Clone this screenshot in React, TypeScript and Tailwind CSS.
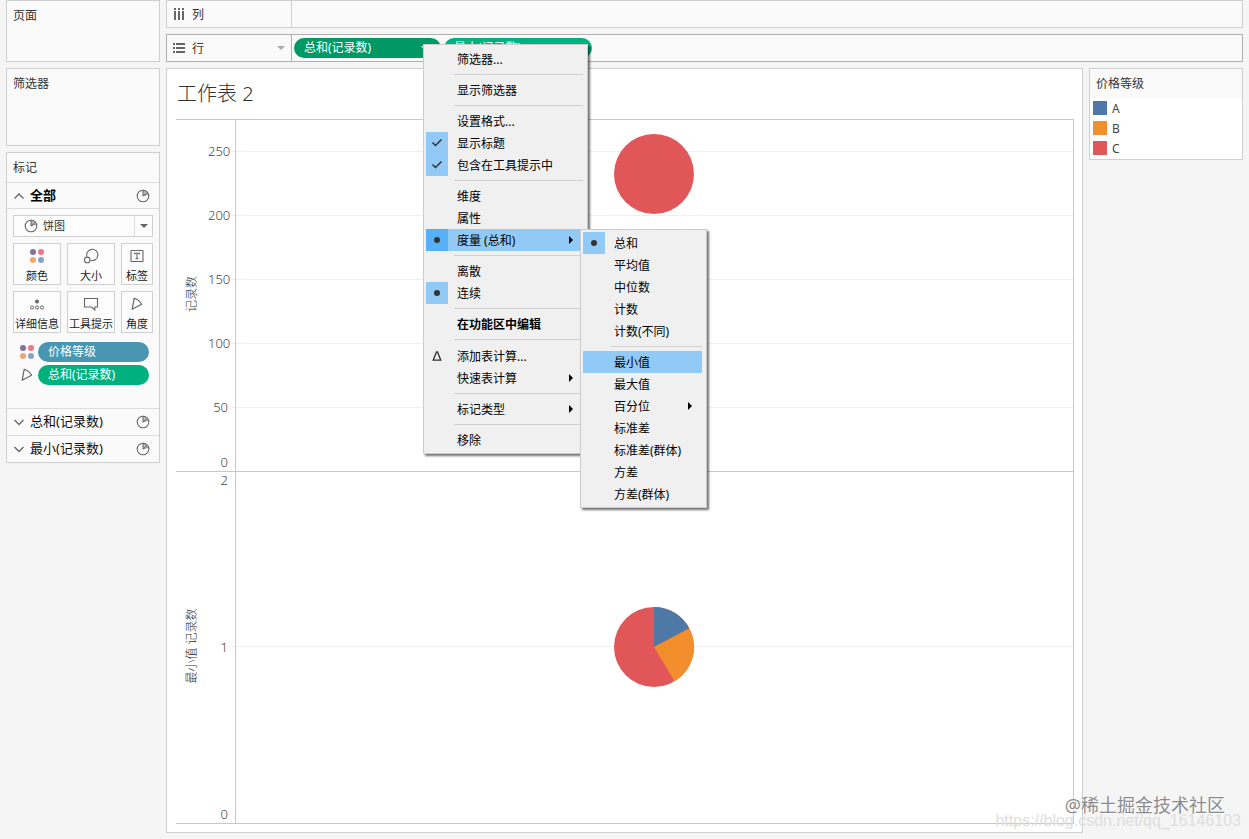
import React from "react";

const COLORS = { A: "#4e79a7", B: "#f28e2b", C: "#e15759" };

const PieIcon = ({ className = "" }: { className?: string }) => (
  <svg
    className={`h-3.5 w-3.5 shrink-0 ${className}`}
    viewBox="0 0 14 14"
    fill="none"
    stroke="#666"
  >
    <circle cx="7" cy="7" r="5.8" strokeWidth="1.1" />
    <path d="M7 7V1.2A5.8 5.8 0 0 1 11.4 3.4Z" fill="#bbb" strokeWidth="1" />
    <path d="M7 7L12.2 5" strokeWidth="0.8" />
  </svg>
);

const ColorIcon = ({ className = "" }: { className?: string }) => (
  <svg className={`h-4 w-4 shrink-0 ${className}`} viewBox="0 0 16 16">
    <circle cx="4" cy="4" r="3" fill="#84719b" />
    <circle cx="12" cy="4" r="3" fill="#ed7687" />
    <circle cx="4" cy="12" r="3" fill="#f4a56c" />
    <circle cx="12" cy="12" r="3" fill="#86a3c6" />
  </svg>
);

const SizeIcon = () => (
  <svg className="h-4 w-4" viewBox="0 0 16 16" fill="none" stroke="#666" strokeWidth="1.1">
    <path d="M4 8.8A5.6 5.6 0 1 1 7.4 12.2" />
    <circle cx="4.2" cy="11.9" r="2.8" />
  </svg>
);

const LabelIcon = () => (
  <svg className="h-4 w-4" viewBox="0 0 16 16" fill="none" stroke="#666">
    <rect x="2" y="2.5" width="12" height="11" rx="0.5" strokeWidth="1.1" />
    <path d="M5.5 6.6V5.3H10.5V6.6M8 5.3V10.8M6.6 10.8H9.4" strokeWidth="1.1" />
  </svg>
);

const DetailIcon = () => (
  <svg className="h-4 w-4" viewBox="0 0 16 16" fill="none" stroke="#666">
    <circle cx="8" cy="5.5" r="2" fill="#666" stroke="none" />
    <circle cx="3" cy="11.5" r="1.6" />
    <circle cx="8" cy="11.5" r="1.6" />
    <circle cx="13" cy="11.5" r="1.6" />
  </svg>
);

const TooltipIcon = () => (
  <svg className="h-4 w-4" viewBox="0 0 16 16" fill="none" stroke="#666" strokeWidth="1.1">
    <path d="M1.5 2.5H14.5V11H11.8V14L8.5 11H1.5Z" />
  </svg>
);

const AngleIcon = ({ className = "" }: { className?: string }) => (
  <svg
    className={`h-4 w-4 shrink-0 ${className}`}
    viewBox="0 0 16 16"
    fill="none"
    stroke="#666"
    strokeWidth="1.2"
  >
    <path d="M5.2 2.2Q10.4 4 12.6 8.2L3.2 13.2Z" strokeLinejoin="round" />
  </svg>
);

const Chevron = ({ up = false }: { up?: boolean }) => (
  <svg
    className="h-3 w-3 shrink-0"
    viewBox="0 0 12 12"
    fill="none"
    stroke="#666"
    strokeWidth="1.3"
  >
    <path d={up ? "M1.5 8.5L6 4L10.5 8.5" : "M1.5 4L6 8.5L10.5 4"} />
  </svg>
);

const ColumnsIcon = () => (
  <svg className="h-3.5 w-3.5 shrink-0" viewBox="0 0 14 14" fill="#666">
    <path d="M2 1h2v2H2zM6 1h2v2H6zM10 1h2v2h-2zM2 4h2v9H2zM6 4h2v9H6zM10 4h2v9h-2z" />
  </svg>
);

const RowsIcon = () => (
  <svg className="h-3.5 w-3.5 shrink-0" viewBox="0 0 14 14" fill="#666">
    <path d="M1 2h2v2H1zM1 6h2v2H1zM1 10h2v2H1zM4 2h9v2H4zM4 6h9v2H4zM4 10h9v2H4z" />
  </svg>
);

const Panel = ({
  title,
  className,
}: {
  title: string;
  className: string;
}) => (
  <section className={`border border-[#cfcfcf] bg-[#fafafa] px-1.5 py-[5px] ${className}`}>
    <h2 className="text-xs leading-5 text-[#333]">{title}</h2>
  </section>
);

const MarkButton = ({
  label,
  children,
}: {
  label: string;
  children: React.ReactNode;
}) => (
  <button className="flex h-[42px] flex-col items-center justify-between overflow-hidden border border-[#cfcfcf] bg-[#fcfcfc] pt-1 text-[11px] leading-4 whitespace-nowrap text-[#222]">
    {children}
    <span>{label}</span>
  </button>
);

const MarkSection = ({ label }: { label: string }) => (
  <button className="flex h-[27px] w-full items-center gap-[5px] border-t border-[#dcdcdc] pr-[9px] pl-1.5 text-[13px] text-[#111]">
    <Chevron />
    <span>{label}</span>
    <PieIcon className="ml-auto" />
  </button>
);

const MarksCard = () => (
  <section className="border border-[#cfcfcf] bg-[#fafafa]">
    <h2 className="h-[29px] px-1.5 pt-[5px] text-xs leading-5 text-[#333]">标记</h2>
    <button className="flex h-[27px] w-full items-center gap-[5px] border-y border-[#dcdcdc] pr-[9px] pl-1.5 text-[13px] font-bold text-black">
      <Chevron up />
      <span>全部</span>
      <PieIcon className="ml-auto" />
    </button>
    <div className="px-1.5 pt-1.5">
      <div className="flex h-[22px] items-center border border-[#cfcfcf] bg-[#fcfcfc] pl-2.5">
        <PieIcon />
        <select
          aria-label="标记类型"
          className="h-full min-w-0 flex-1 appearance-none bg-transparent pl-[5px] text-[11px] text-[#333] outline-none"
        >
          <option>饼图</option>
        </select>
        <span className="flex h-full w-[18px] items-center justify-center border-l border-[#dcdcdc]">
          <svg className="h-1 w-2" viewBox="0 0 8 4" fill="#666">
            <path d="M0 0H8L4 4Z" />
          </svg>
        </span>
      </div>
      <div className="mt-1.5 grid grid-cols-[48px_48px_1fr] gap-1.5">
        <MarkButton label="颜色">
          <ColorIcon />
        </MarkButton>
        <MarkButton label="大小">
          <SizeIcon />
        </MarkButton>
        <MarkButton label="标签">
          <LabelIcon />
        </MarkButton>
        <MarkButton label="详细信息">
          <DetailIcon />
        </MarkButton>
        <MarkButton label="工具提示">
          <TooltipIcon />
        </MarkButton>
        <MarkButton label="角度">
          <AngleIcon />
        </MarkButton>
      </div>
      <div className="mt-[9px] flex h-[66px] flex-col gap-[3px] pr-1 pl-1.5">
        <div className="flex items-center gap-[3px]">
          <ColorIcon />
          <button className="h-5 flex-1 rounded-full bg-[#4996b2] px-2.5 text-left text-xs text-white">
            价格等级
          </button>
        </div>
        <div className="flex items-center gap-[3px]">
          <AngleIcon />
          <button className="h-5 flex-1 rounded-full bg-[#00b180] px-2.5 text-left text-xs text-white">
            总和(记录数)
          </button>
        </div>
      </div>
    </div>
    <MarkSection label="总和(记录数)" />
    <MarkSection label="最小(记录数)" />
  </section>
);

const Legend = () => (
  <aside className="w-[154px] shrink-0 self-start border border-[#cfcfcf] bg-white pb-px">
    <h2 className="h-[29px] bg-[#fafafa] px-1.5 pt-[5px] text-xs leading-5 text-[#333]">
      价格等级
    </h2>
    <ul>
      {Object.entries(COLORS).map(([name, color]) => (
        <li key={name} className="flex h-5 items-center gap-[5px] pl-[3px] text-xs text-[#444]">
          <span className="h-3.5 w-3.5" style={{ backgroundColor: color }} />
          <span className="pt-0.5">{name}</span>
        </li>
      ))}
    </ul>
  </aside>
);

type Slice = { color: string; from: number; to: number };

const point = (deg: number) => {
  const rad = (deg * Math.PI) / 180;
  return `${40 + 40 * Math.sin(rad)} ${40 - 40 * Math.cos(rad)}`;
};

const Pie = ({ slices = [] }: { slices?: Slice[] }) => (
  <svg className="h-20 w-20" viewBox="0 0 80 80">
    <circle cx="40" cy="40" r="40" fill={COLORS.C} />
    {slices.map((s) => (
      <path
        key={s.color}
        d={`M40 40L${point(s.from)}A40 40 0 0 1 ${point(s.to)}Z`}
        fill={s.color}
      />
    ))}
  </svg>
);

const AxisTitle = ({ children }: { children: React.ReactNode }) => (
  <div className="flex w-8 shrink-0 items-center justify-center pb-0.5">
    <span className="-rotate-90 text-xs font-light whitespace-nowrap text-[#333]">
      {children}
    </span>
  </div>
);

// one tick label with its grid line running across the plot
const GridRow = ({ label, className }: { label: string; className: string }) => (
  <div className={`flex items-center ${className}`}>
    <span className="w-5 shrink-0 text-right text-[13px] leading-4 font-light text-[#444]">
      {label}
    </span>
    <span className="ml-[3px] h-px flex-1 bg-[#efefef]" />
  </div>
);

const EdgeLabel = ({ children }: { children: React.ReactNode }) => (
  <span className="w-5 text-right text-[13px] leading-4 font-light text-[#444]">
    {children}
  </span>
);

const Sheet = () => (
  <main className="flex min-w-0 flex-1 flex-col border border-[#cfcfcf] bg-white pr-2 pb-2 pl-[9px]">
    <h1 className="h-[50px] pt-[11px] pl-px text-xl leading-7 font-light text-[#333]">
      工作表 2
    </h1>
    <div className="grid flex-1 grid-rows-2 border-y border-[#c8c8c8]">
      <div className="flex border-b border-[#c8c8c8]">
        <AxisTitle>记录数</AxisTitle>
        <div className="grid flex-1 border-r border-[#c8c8c8]">
          <div className="col-start-1 row-start-1 -mt-px flex flex-col pb-px">
            {["250", "200", "150", "100", "50"].map((v) => (
              <GridRow key={v} label={v} className="h-16" />
            ))}
            <div className="flex flex-1 items-end">
              <EdgeLabel>0</EdgeLabel>
            </div>
          </div>
          <div className="col-start-1 row-start-1 ml-[27px] flex justify-center border-l border-[#c8c8c8] pt-3.5 pr-0.5">
            <Pie />
          </div>
        </div>
      </div>
      <div className="flex">
        <AxisTitle>最小值 记录数</AxisTitle>
        <div className="grid flex-1 border-r border-[#c8c8c8]">
          <div className="col-start-1 row-start-1 flex flex-col justify-between pb-px">
            <EdgeLabel>2</EdgeLabel>
            <GridRow label="1" className="h-4" />
            <EdgeLabel>0</EdgeLabel>
          </div>
          <div className="col-start-1 row-start-1 ml-[27px] flex items-center justify-center border-l border-[#c8c8c8] pr-0.5">
            <Pie
              slices={[
                { color: COLORS.A, from: 0, to: 62 },
                { color: COLORS.B, from: 62, to: 149 },
              ]}
            />
          </div>
        </div>
      </div>
    </div>
  </main>
);

type Item = {
  label: string;
  mark?: "check" | "dot" | "delta";
  arrow?: boolean;
  active?: boolean;
  bold?: boolean;
};

const MenuItem = ({ label, mark, arrow, active, bold }: Item) => {
  const ticked = mark === "check" || mark === "dot";
  return (
    <button
      role="menuitem"
      className={`flex w-full items-center text-left text-xs text-black ${
        mark === "delta" ? "h-[23px]" : "h-[22px]"
      } ${active ? "bg-[#91c9f7]" : ""} ${bold ? "font-bold" : ""}`}
    >
      <span
        className={`mr-[9px] flex h-full w-[22px] shrink-0 items-center justify-center ${
          ticked ? (active ? "bg-[#56b0fa]" : "bg-[#91c9f7]") : ""
        }`}
      >
        {mark && (
          <svg className="h-3 w-3" viewBox="0 0 12 12" fill="none" stroke="#333">
            {mark === "check" && <path d="M1.5 5.5L4.5 8.5L10.5 2.5" strokeWidth="1.5" />}
            {mark === "dot" && <circle cx="6" cy="6" r="3" fill="#333" stroke="none" />}
            {mark === "delta" && <path d="M5.5 2H6.5L9.8 10.2H2.2Z" strokeWidth="1.3" />}
          </svg>
        )}
      </span>
      <span className="flex-1 pt-0.5 whitespace-nowrap">{label}</span>
      {arrow && (
        <svg className="mr-2.5 h-2 w-1" viewBox="0 0 4 8">
          <path d="M0 0L4 4L0 8Z" />
        </svg>
      )}
    </button>
  );
};

const Menu = ({ groups, className }: { groups: Item[][]; className: string }) => (
  <div
    role="menu"
    className={`absolute border border-[#cccccc] bg-[#f0f0f0] pr-1 pl-0.5 shadow-[2px_2px_2px_rgba(0,0,0,0.55)] ${className}`}
  >
    {groups.map((items, i) => (
      <React.Fragment key={i}>
        {i > 0 && <div className="my-1 ml-7 h-px bg-[#d0d0d0]" />}
        {items.map((item) => (
          <MenuItem key={item.label} {...item} />
        ))}
      </React.Fragment>
    ))}
  </div>
);

const pillMenu: Item[][] = [
  [{ label: "筛选器..." }],
  [{ label: "显示筛选器" }],
  [
    { label: "设置格式..." },
    { label: "显示标题", mark: "check" },
    { label: "包含在工具提示中", mark: "check" },
  ],
  [
    { label: "维度" },
    { label: "属性" },
    { label: "度量 (总和)", mark: "dot", arrow: true, active: true },
  ],
  [{ label: "离散" }, { label: "连续", mark: "dot" }],
  [{ label: "在功能区中编辑", bold: true }],
  [
    { label: "添加表计算...", mark: "delta" },
    { label: "快速表计算", arrow: true },
  ],
  [{ label: "标记类型", arrow: true }],
  [{ label: "移除" }],
];

const measureMenu: Item[][] = [
  [
    { label: "总和", mark: "dot" },
    { label: "平均值" },
    { label: "中位数" },
    { label: "计数" },
    { label: "计数(不同)" },
  ],
  [
    { label: "最小值", active: true },
    { label: "最大值" },
    { label: "百分位", arrow: true },
    { label: "标准差" },
    { label: "标准差(群体)" },
    { label: "方差" },
    { label: "方差(群体)" },
  ],
];

const App: React.FC = () => {
  return (
    <div className="relative flex min-h-screen gap-1.5 bg-[#f5f5f5] px-1.5 pb-1.5 font-['Noto_Sans','Noto_Sans_CJK_SC',sans-serif]">
      {/* Cards */}
      <div className="flex w-[154px] shrink-0 flex-col gap-1.5">
        <Panel title="页面" className="h-[62px]" />
        <Panel title="筛选器" className="h-[78px]" />
        <MarksCard />
      </div>

      <div className="flex min-w-0 flex-1 flex-col gap-1.5">
        {/* Shelves */}
        <div className="flex h-7 border border-[#cfcfcf] bg-[#fafafa]">
          <div className="flex w-[125px] shrink-0 items-center gap-1.5 border-r border-[#cfcfcf] pl-[5px] text-xs text-[#333]">
            <ColumnsIcon />
            <span className="pt-0.5">列</span>
          </div>
        </div>
        <div className="flex h-7 border border-[#b0b0b0] bg-[#fafafa]">
          <div className="flex w-[125px] shrink-0 items-center gap-1.5 border-r border-[#b0b0b0] pr-1.5 pl-[5px] text-xs text-[#333]">
            <RowsIcon />
            <span className="pt-0.5">行</span>
            <svg className="ml-auto h-1 w-2" viewBox="0 0 8 4" fill="#aaa">
              <path d="M0 0H8L4 4Z" />
            </svg>
          </div>
          <div className="flex items-center gap-[3px] pl-0.5">
            <button className="flex h-5 w-[147px] items-center justify-between rounded-full bg-[#009966] pr-3 pl-2.5 text-xs text-white">
              总和(记录数)
              <svg className="h-1 w-2" viewBox="0 0 8 4" fill="#fff">
                <path d="M0 0H8L4 4Z" />
              </svg>
            </button>
            <button className="h-5 w-[148px] rounded-full bg-[#00b180] px-2.5 text-left text-xs text-white">
              最小(记录数)
            </button>
          </div>
        </div>

        <div className="flex flex-1 gap-1.5">
          <Sheet />
          <Legend />
        </div>
      </div>

      {/* Context menus */}
      <Menu groups={pillMenu} className="top-11 left-[423px] w-[165px] pt-[3px] pb-0.5" />
      <Menu groups={measureMenu} className="top-[229px] left-[580px] w-[127px] py-0.5" />

      {/* Watermarks */}
      <div className="pointer-events-none absolute right-2 bottom-2 text-right font-['Liberation_Sans','Noto_Sans_CJK_SC',sans-serif] text-base leading-5 text-[#dedede]">
        https://blog.csdn.net/qq_16146103
      </div>
      <div className="pointer-events-none absolute right-6 bottom-5 text-lg leading-7 text-[#8c8c8c] [text-shadow:1px_1px_1px_#fff]">
        @稀土掘金技术社区
      </div>
    </div>
  );
};

export default App;
